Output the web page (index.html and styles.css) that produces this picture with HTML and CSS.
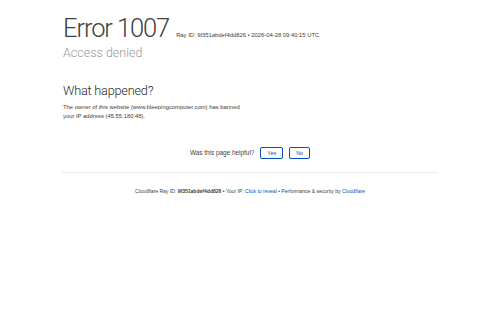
FILE: index.html
```html
<!DOCTYPE html>
<html>
<head>
<meta charset="utf-8">
<link rel="stylesheet" href="styles.css">
</head>
<body>
<div class="wrap">
  <header class="head">
    <h1 class="title"><span class="code">Error 1007</span><span class="ray">Ray ID: 9f351abdef4dd826 &bull; 2026-04-28 09:40:15 UTC</span></h1>
    <h2 class="sub">Access denied</h2>
  </header>
  <section class="what">
    <h2 class="what-title">What happened?</h2>
    <p class="what-text">The owner of this website (www.bleepingcomputer.com) has banned your IP address (45.55.180.48).</p>
  </section>
  <div class="feedback">
    <span class="q">Was this page helpful?</span>
    <button class="btn">Yes</button>
    <button class="btn">No</button>
  </div>
  <footer class="foot">
    Cloudflare Ray ID: <strong>9f351abdef4dd826</strong>
    <span class="dot">&bull;</span>
    Your IP: <a class="link">Click to reveal</a>
    <span class="dot">&bull;</span>
    Performance &amp; security by <a class="link">Cloudflare</a>
  </footer>
</div>
</body>
</html>
```
FILE: styles.css
```css
html, body { margin: 0; padding: 0; background: #fff; }
body { font-family: "Liberation Sans", Arial, sans-serif; color: #404040; }
.wrap { width: 376px; margin: 0 auto; padding-top: 13px; }
.head { margin: 0; }
.title { margin: 0; font-weight: 300; display: flex; align-items: baseline; gap: 7px; line-height: 30px; height: 30px; }
.code { font-family: Roboto, sans-serif; font-size: 25.5px; letter-spacing: -1.1px; color: #404040; font-weight: 300; padding-left: 1px; }
.ray { font-size: 5.85px; line-height: 7px; color: #404040; font-weight: 400; }
.sub { margin: 1.5px 0 0; font-family: Roboto, sans-serif; font-size: 12.5px; line-height: 16px; font-weight: 300; color: #999; padding-left: 1px; }
.what { margin-top: 22px; width: 184px; padding-left: 1px; }
.what-title { margin: 0; font-family: Roboto, sans-serif; font-size: 12.7px; letter-spacing: -0.2px; line-height: 16px; font-weight: 300; color: #2a2a2a; }
.what-text { margin: 4.5px 0 0; font-size: 5.85px; line-height: 9px; color: #404040; }
.feedback { margin-top: 25.5px; display: flex; justify-content: center; align-items: center; gap: 6px; font-size: 6.4px; height: 12px; }
.btn { font-family: inherit; font-size: 5.4px; color: #0051c3; background: #fff; border: 1px solid #0051c3; border-radius: 2px; height: 12px; padding: 0 6px; line-height: 10px; }
.foot { margin-top: 13px; border-top: 1px solid #ebebeb; padding-top: 14px; text-align: center; font-size: 5.05px; line-height: 8px; color: #404040; }
.link { color: #0051c3; }
strong { font-weight: 700; }
```
